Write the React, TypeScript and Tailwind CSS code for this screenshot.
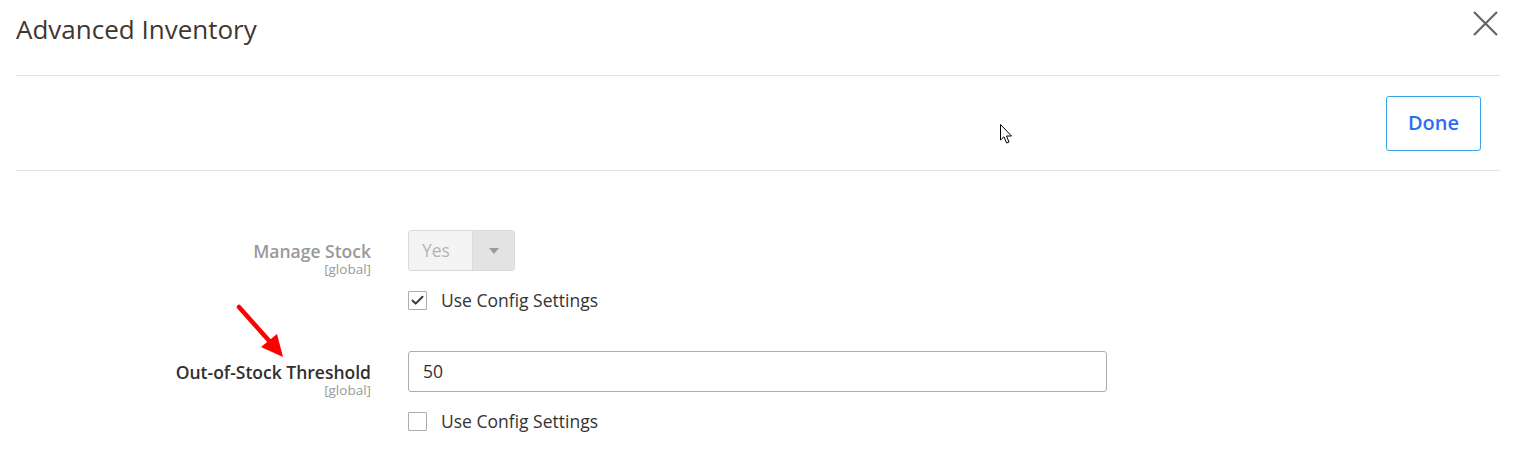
import { Check } from "lucide-react";

function Checkbox({ checked }: { readonly checked?: boolean }) {
  return (
    <span className="flex h-[19px] w-[19px] items-center justify-center rounded-[1px] border border-[#adadad] bg-white">
      {checked ? <Check className="h-[15px] w-[15px] text-[#41362f]" strokeWidth={3.2} /> : null}
    </span>
  );
}

function ConfigToggle({ checked }: { readonly checked?: boolean }) {
  return (
    <label className="flex h-[24px] items-center gap-[14px] text-[17.5px] text-[#333]">
      <Checkbox checked={checked} />
      <span>Use Config Settings</span>
    </label>
  );
}

function FieldLabel({ disabled, text }: { readonly disabled?: boolean; readonly text: string }) {
  return (
    <div className="w-[371px] shrink-0 text-right">
      <div className={`text-[17.5px] leading-[22px] font-semibold ${disabled ? "text-[#999]" : "text-[#303030]"}`}>
        {text}
      </div>
      <div className="text-[13.5px] leading-[15px] text-[#999]">[global]</div>
    </div>
  );
}

export default function App() {
  return (
    <main className="relative h-[463px] w-[1516px] overflow-hidden bg-white font-['Open_Sans',sans-serif]">
      <button
        type="button"
        aria-label="Close"
        className="absolute top-[11px] right-[18px] h-[25px] w-[25px] text-[#6a6460]"
      >
        <svg viewBox="0 0 25 25" className="h-full w-full" fill="none" stroke="currentColor" strokeWidth="2.2">
          <path d="M1 1 L24 24 M24 1 L1 24" />
        </svg>
      </button>

      <div className="mx-4">
        <header className="flex h-[76px] items-center border-b border-[#e3e3e3] pb-[17px]">
          <h1 className="text-[26px] leading-none text-[#41362f]">Advanced Inventory</h1>
        </header>

        <div className="flex h-[95px] items-center justify-end border-b border-[#e3e3e3] pr-[19px]">
          <button
            type="button"
            className="h-[55px] w-[95px] rounded-[3px] border border-[#38a5e5] bg-white text-[20px] font-semibold text-[#2d6df6]"
          >
            Done
          </button>
        </div>

        <section className="-mx-4 flex flex-col pt-[59px]">
          <div className="flex items-start gap-[37px]">
            <div className="pt-[10px]">
              <FieldLabel disabled text="Manage Stock" />
            </div>
            <div className="flex flex-col gap-[17px]">
              <div className="flex h-[41px] w-[107px] overflow-hidden rounded-[3px] border border-[#dadada] bg-[#f4f4f4]">
                <span className="flex flex-1 items-center pl-[13px] text-[17.5px] text-[#b5b5b5]">Yes</span>
                <span className="flex w-[42px] items-center justify-center border-l border-[#dadada] bg-[#e3e3e3]">
                  <span className="h-0 w-0 border-x-[5px] border-t-[6px] border-x-transparent border-t-[#9a9a9a]" />
                </span>
              </div>
              <ConfigToggle checked />
            </div>
          </div>

          <div className="mt-[39px] flex items-start gap-[37px]">
            <div className="pt-[10px]">
              <FieldLabel text="Out-of-Stock Threshold" />
            </div>
            <div className="flex flex-col gap-[17px]">
              <div className="flex h-[41px] w-[699px] items-center rounded-[3px] border border-[#adadad] bg-white pl-[14px] text-[17.5px] text-[#303030]">
                50
              </div>
              <ConfigToggle />
            </div>
          </div>
        </section>
      </div>

      {/* annotation arrow */}
      <svg className="absolute top-[300px] left-[232px] h-[62px] w-[56px]" viewBox="0 0 56 62">
        <path d="M7 7 L40 44" stroke="#ff0000" strokeWidth="4.5" strokeLinecap="round" />
        <path d="M51 57 L29 47 L45 34 Z" fill="#ff0000" />
      </svg>

      {/* mouse pointer */}
      <svg className="absolute top-[124px] left-[1000px] h-[22px] w-[14px]" viewBox="0 0 14 22">
        <path
          d="M0.5 0.5 L0.5 16 L4 12.8 L6.6 19 L9 18 L6.5 12 L11.5 12 Z"
          fill="#fff"
          stroke="#000"
          strokeWidth="1"
          strokeLinejoin="round"
        />
      </svg>
    </main>
  );
}
